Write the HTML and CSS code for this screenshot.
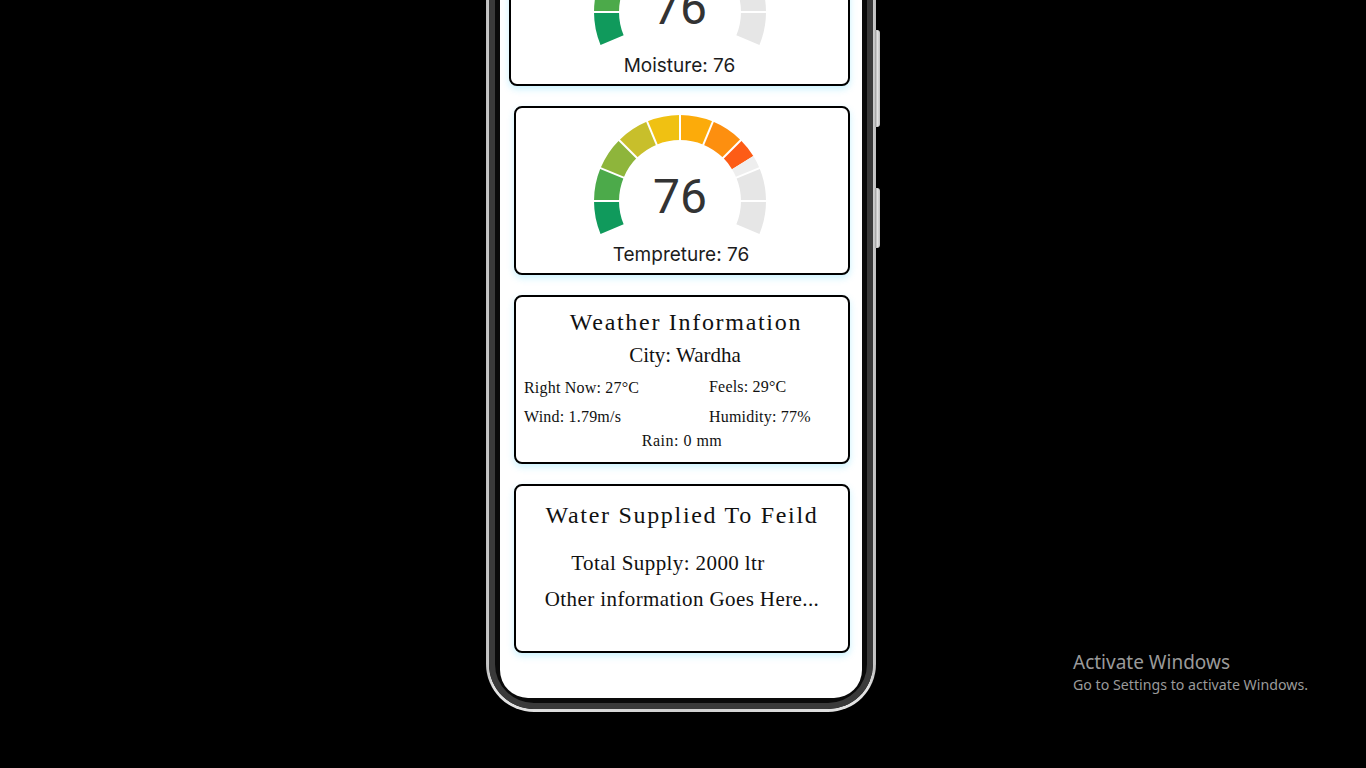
FILE: index.html
```html
<!DOCTYPE html>
<html lang="en">
<head>
<meta charset="utf-8">
<title>Farm Dashboard</title>
<link rel="stylesheet" href="styles.css">
</head>
<body>
<svg class="defs" width="0" height="0" aria-hidden="true">
  <symbol id="gauge-arcs" viewBox="0 0 180 128">
    <g fill="none" stroke-width="25">
      <path d="M22.09 114.13 A73.5 73.5 0 0 1 16.5 86" stroke="#109a5c"/>
      <path d="M16.5 86 A73.5 73.5 0 0 1 22.09 57.87" stroke="#4caa4a"/>
      <path d="M22.09 57.87 A73.5 73.5 0 0 1 38.03 34.03" stroke="#8eb53b"/>
      <path d="M38.03 34.03 A73.5 73.5 0 0 1 61.87 18.09" stroke="#c8bf2b"/>
      <path d="M61.87 18.09 A73.5 73.5 0 0 1 90 12.5" stroke="#f0c112"/>
      <path d="M90 12.5 A73.5 73.5 0 0 1 118.13 18.09" stroke="#fcab0a"/>
      <path d="M118.13 18.09 A73.5 73.5 0 0 1 141.97 34.03" stroke="#fd8f0f"/>
      <path d="M141.97 34.03 A73.5 73.5 0 0 1 152.67 47.6" stroke="#fd5c16"/>
      <path d="M152.67 47.6 A73.5 73.5 0 0 1 157.91 57.87" stroke="#eeeeee"/>
      <path d="M157.91 57.87 A73.5 73.5 0 0 1 163.5 86" stroke="#e6e6e6"/>
      <path d="M163.5 86 A73.5 73.5 0 0 1 157.91 114.13" stroke="#e6e6e6"/>
    </g>
    <g stroke="#ffffff" stroke-width="2">
      <line x1="31" y1="86" x2="2" y2="86"/>
      <line x1="35.49" y1="63.42" x2="8.7" y2="52.32"/>
      <line x1="48.28" y1="44.28" x2="27.77" y2="23.77"/>
      <line x1="67.42" y1="31.49" x2="56.32" y2="4.7"/>
      <line x1="90" y1="27" x2="90" y2="-2"/>
      <line x1="112.58" y1="31.49" x2="123.68" y2="4.7"/>
      <line x1="131.72" y1="44.28" x2="152.23" y2="23.77"/>
      <line x1="144.51" y1="63.42" x2="171.3" y2="52.32"/>
      <line x1="149" y1="86" x2="178" y2="86"/>
    </g>
  </symbol>
</svg>

<div class="phone">
  <span class="side-btn btn-power"></span>
  <span class="side-btn btn-volume"></span>
  <div class="bezel">
    <div class="screen">
      <section class="card gauge-card moisture">
        <svg class="gauge" width="180" height="128" viewBox="0 0 180 128">
          <use href="#gauge-arcs"/>
          <text x="90" y="98" class="gauge-value">76</text>
        </svg>
        <p class="gauge-label">Moisture: 76</p>
      </section>

      <section class="card gauge-card temperature">
        <svg class="gauge" width="180" height="128" viewBox="0 0 180 128">
          <use href="#gauge-arcs"/>
          <text x="90" y="98" class="gauge-value">76</text>
        </svg>
        <p class="gauge-label">Tempreture: 76</p>
      </section>

      <section class="card weather">
        <h2 class="card-title">Weather Information</h2>
        <p class="city">City: Wardha</p>
        <div class="weather-grid">
          <span>Right Now: 27°C</span>
          <span class="feels">Feels: 29°C</span>
          <span>Wind: 1.79m/s</span>
          <span>Humidity: 77%</span>
        </div>
        <p class="rain">Rain: 0 mm</p>
      </section>

      <section class="card water">
        <h2 class="card-title">Water Supplied To Feild</h2>
        <p class="supply">Total Supply: 2000 ltr</p>
        <p class="other">Other information Goes Here...</p>
      </section>
    </div>
  </div>
</div>

<div class="activate">
  <div class="activate-title">Activate Windows</div>
  <div class="activate-sub">Go to Settings to activate Windows.</div>
</div>
</body>
</html>
```

FILE: styles.css
```css
* {
  box-sizing: border-box;
}

html, body {
  margin: 0;
  padding: 0;
}

body {
  position: relative;
  width: 1366px;
  height: 768px;
  overflow: hidden;
  background: #000;
  display: flex;
  justify-content: center;
  align-items: flex-end;
  padding-bottom: 56px;
  font-family: "Liberation Serif", serif;
}

.defs {
  position: absolute;
  width: 0;
  height: 0;
}

/* ---------- phone ---------- */
.phone {
  position: relative;
  flex: none;
  width: 390px;
  height: 820px;
  margin-left: -4px;
  padding: 3px;
  border-radius: 48px;
  background: linear-gradient(90deg, #bdbdbd, #e4e4e4 2%, #cfcfcf 50%, #e4e4e4 98%, #bdbdbd);
}

.bezel {
  height: 100%;
  border-radius: 45px;
  background: #0a0a0a;
  box-shadow: inset 0 0 0 6px #3a3a3a;
  padding: 11px;
}

.side-btn {
  position: absolute;
  right: -4px;
  width: 5px;
  border-radius: 0 3px 3px 0;
  background: linear-gradient(90deg, #9a9a9a, #e2e2e2 50%, #bcbcbc);
}

.btn-power {
  top: 138px;
  height: 97px;
}

.btn-volume {
  top: 296px;
  height: 60px;
}

.screen {
  height: 100%;
  overflow: hidden;
  border-radius: 28px;
  background: #fff;
  display: flex;
  flex-direction: column;
  justify-content: flex-end;
  gap: 20px;
  padding: 0 12px 45px 14px;
}

/* ---------- cards ---------- */
.card {
  flex: none;
  height: 169px;
  border: 2px solid #000;
  border-radius: 8px;
  background: #fff;
  box-shadow: 0 3px 7px rgba(60, 210, 250, 0.28);
}

.gauge-card {
  display: flex;
  flex-direction: column;
  align-items: center;
  padding: 7px 0 6px;
}

.gauge-card.moisture {
  margin-left: -5px;
}

.gauge {
  display: block;
  flex: none;
  overflow: visible;
}

.temperature .gauge {
  margin-right: 4px;
}

.gauge-value {
  font-family: Roboto, "Liberation Sans", sans-serif;
  font-size: 48px;
  fill: #333;
  text-anchor: middle;
}

.gauge-label {
  margin: 0;
  font-family: Inter, Roboto, "Liberation Sans", sans-serif;
  font-size: 19px;
  line-height: 24px;
  color: #1c1c1c;
}

.temperature .gauge-label {
  margin-right: 2px;
}

.card-title {
  margin: 0;
  font-weight: 400;
  font-size: 24px;
  line-height: 30px;
  letter-spacing: 1.7px;
  text-align: center;
  color: #111;
}

.weather {
  padding: 10px 8px 0 8px;
  color: #111;
}

.weather .card-title {
  padding-left: 8px;
}

.city {
  margin: 5px 0 0;
  padding-left: 6px;
  font-size: 21px;
  line-height: 26px;
  text-align: center;
}

.weather-grid {
  display: grid;
  grid-template-columns: 185px 1fr;
  row-gap: 7px;
  margin-top: 9px;
  font-size: 16px;
  line-height: 22px;
  letter-spacing: 0.2px;
}

.weather-grid .feels {
  position: relative;
  top: -1px;
}

.rain {
  margin: 2px 0 0;
  font-size: 16px;
  line-height: 22px;
  letter-spacing: 0.5px;
  text-align: center;
}

.water {
  padding: 14px 8px 0;
  color: #111;
}

.supply,
.other {
  margin: 0;
  font-size: 21px;
  line-height: 26px;
  letter-spacing: 0.4px;
  text-align: center;
}

.supply {
  margin-top: 20px;
  padding-right: 28px;
}

.other {
  margin-top: 10px;
}

/* ---------- watermark ---------- */
.activate {
  position: absolute;
  left: 1073px;
  top: 650px;
  font-family: "Noto Sans", "Open Sans", sans-serif;
  color: #9a9a9a;
}

.activate-title {
  font-size: 19px;
  line-height: 24px;
}

.activate-sub {
  font-size: 14.2px;
  line-height: 22px;
}
```
